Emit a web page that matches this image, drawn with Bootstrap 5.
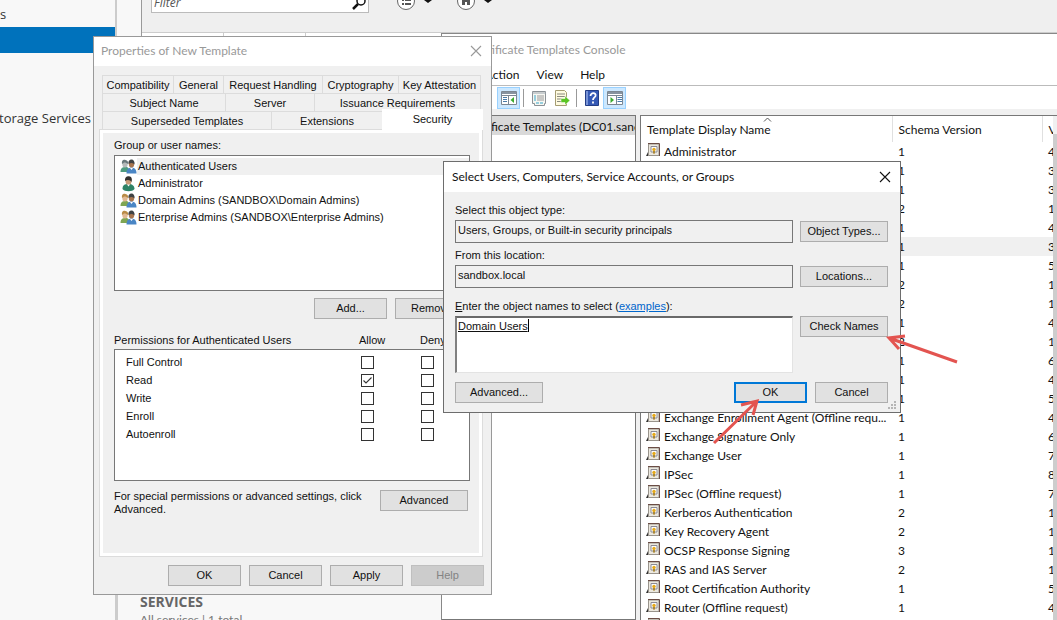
<!DOCTYPE html>
<html lang="en">
<head>
<meta charset="utf-8">
<meta name="viewport" content="width=device-width, initial-scale=1">
<title>Certificate Templates Console</title>
<link href="https://cdn.jsdelivr.net/npm/bootstrap@5.3.0/dist/css/bootstrap.min.css" rel="stylesheet">
<style>
  :root { --ui: Lato, "Open Sans", sans-serif; --dlg: "Liberation Sans", Arial, sans-serif; }
  body { font: 12px/19px var(--ui); color: #111; background: #fff; }
  .desktop { height: 100vh; }
  .dlg { font: 11px/13px var(--dlg); color: #111; background: #f0f0f0; }
  .titlebar { height: 29px; background: #fff; font: 12px/16px var(--ui); }
  .closer { display: flex; align-items: center; justify-content: center; width: 30px; height: 28px; color: inherit; }
  .w-btn { height: 21px; width: 73px; padding: 0; font: 11px/13px var(--dlg); color: #111; background: #e1e1e1; border: 1px solid #adadad; border-radius: 0; }
  .w-btn.wide { width: 88px; }
  .w-btn.primary { border: 2px solid #0078d7; }
  .w-btn:disabled { color: #838383; background: #ccc; border-color: #bfbfbf; opacity: 1; }

  /* Server Manager, behind everything */
  .manager { background: #f8f8f8; }
  .side { width: 115px; font: 13px/26px "Open Sans", sans-serif; color: #333; padding-top: 1px; }
  .side a { color: inherit; height: 26px; white-space: nowrap; display: flex; justify-content: flex-end; }
  .side .chosen { background: #0072bc; }
  .gutter { width: 26px; border-left: 2px solid #ccc; }
  .stage { border-left: 1px solid #999; background: #fff; }
  .strip { height: 33px; background: #efefef; border-bottom: 1px solid #ccc; padding-left: 9px; }
  .filter { width: 218px; height: 21px; margin-top: -8px; background: #fff; border: 1px solid #bbb; }
  .filter input { font: italic 12px/16px "Open Sans", sans-serif; color: #555; border: 0; width: 190px; padding: 0 2px; }
  .filter input::placeholder { color: #555; opacity: 1; }
  .tile-heads span { width: 82px; border-right: 1px solid #ccc; height: 30px; }
  .services { left: 116px; width: 325px; top: 590px; bottom: 0; padding: 3px 22px; background: #f8f8f8; border-left: 2px solid #ccc; color: #777; line-height: 17px; }
  .services h2 { font: bold 14px/18px "Open Sans", sans-serif; color: #666; margin: 0; }

  /* Console window */
  .console { left: 441px; right: 0; top: 33px; bottom: 0; background: #fff; border: 1px solid #888; border-width: 1px 0 0 1px; }
  .console-title { height: 31px; padding-left: 27px; color: #999; }
  .menus { height: 22px; padding-left: 7px; gap: 17px; border-bottom: 1px solid #bbb; }
  .menus a { color: #111; text-decoration: none; }
  .tools { height: 23px; padding-left: 55px; }
  .tools button { width: 23px; height: 22px; padding: 0; background: none; border: 1px solid transparent; }
  .tools button.on { background: #cce8ff; border-color: #99d1ff; }
  .tools .bar { width: 1px; height: 18px; margin: 0 3px; background: #999; }
  .panes { background: #f0f0f0; padding-top: 6px; gap: 4px; }
  .tree { width: 194px; flex: none; background: #fff; border: 1px solid #777; border-left: 0; }
  .tree div { height: 19px; line-height: 21px; background: #d9d9d9; padding-left: 23px; white-space: nowrap; overflow: hidden; }
  .listing { background: #fff; border: 1px solid #777; border-width: 1px 0 0 1px; overflow: hidden; }
  .templates { width: 100%; table-layout: fixed; border-collapse: collapse; line-height: 18px; }
  .templates th { height: 26px; font-weight: 400; padding: 2px 0 0 6px; border-right: 1px solid #e0e0e0; white-space: nowrap; }
  .templates th:last-child { border: 0; }
  .templates td { height: 19px; padding: 0 0 0 6px; white-space: nowrap; overflow: hidden; }
  .templates tr.hot { background: #f0f0f0; }
  .templates td div { margin-left: -1px; }
  .templates svg { display: block; flex: none; margin-bottom: 3px; }
  .thumb { width: 4px; flex: none; background: #cdcdcd; border-top: 18px solid #f0f0f0; }
  .sorter { left: 122px; top: 1px; }

  /* Properties dialog */
  .props { left: 93px; top: 36px; width: 399px; border: 1px solid #999; }
  .props .titlebar { color: #999; padding: 0 0 2px 7px; }
  .tabs { margin: 9px 10px 0 8px; }
  .tabs > div { height: 18px; }
  .tabs button { font: 11px/13px var(--dlg); color: #111; padding: 2px 0 0; background: #f0f0f0; border: 1px solid #dcdcdc; border-width: 1px 0 0 1px; }
  .tabs > div button:last-child { border-right-width: 1px; }
  .tabs .active { background: #fff; height: 21px; margin: -2px -2px 0 0; padding: 0 0 2px; border-color: #fff; position: relative; z-index: 1; }
  .sheet { margin: 0 8px 0 5px; height: 428px; padding: 9px 11px 0 14px; border: 1px solid #dcdcdc; outline: 3px solid #fff; outline-offset: -4px; }
  .box { background: #fff; border: 1px solid #777; width: 356px; }
  .people { height: 136px; margin: 3px 0 0; padding: 2px 0 0 5px; }
  .people li { height: 17px; line-height: 17px; }
  .people span { flex: 1; padding-left: 1px; }
  .people .sel span { background: #f0f0f0; }
  .perms { width: 356px; table-layout: fixed; }
  .perms th { font-weight: 400; height: 18px; padding: 0; white-space: nowrap; }
  .perms td { height: 18px; padding: 0; background: #fff; line-height: 18px; }
  .perms td:first-child { padding-left: 11px; }
  .perms input { appearance: none; display: block; width: 13px; height: 13px; margin: 0; border: 1px solid #333; background: #fff; }
  .perms input:checked { background: #fff url("data:image/svg+xml,%3Csvg xmlns='http://www.w3.org/2000/svg' viewBox='0 0 11 11'%3E%3Cpath d='M1.5 5.5 4 8 9.5 2.5' fill='none' stroke='%23333' stroke-width='1.1'/%3E%3C/svg%3E"); }
  .permbox { height: 132px; }
  .permbox .perms { width: 354px; margin-top: 3px; }
  .hint { width: 266px; }

  /* Object picker dialog */
  .picker { left: 443px; top: 161px; width: 458px; height: 252px; border: 1px solid #6d6d6d; }
  .picker .titlebar { height: 30px; padding-left: 8px; color: #111; }
  .picker label { display: block; height: 13px; }
  .picker .form-area { padding: 12px 12px 0 11px; }
  .picker .line { display: flex; justify-content: space-between; align-items: center; margin: 3px 0 6px; }
  .picker .field { width: 338px; height: 23px; padding: 0 2px 3px; font: 11px/13px var(--dlg); color: #111; background: #f0f0f0; border: 1px solid #777; border-radius: 0; }
  .picker textarea { display: block; width: 338px; height: 57px; resize: none; padding: 2px 1px; font: 11px/13px var(--dlg); color: #111; text-decoration: underline; border: 1px solid #e3e3e3; border-top: 2px solid #696969; border-left: 2px solid #808080; border-radius: 0; background: #fff; }
  .picker a { color: #06c; }
  .caret { left: 528px; top: 319px; width: 1px; height: 13px; background: #000; }
  .grip { right: 3px; bottom: 2px; }
</style>
</head>
<body>
<svg width="0" height="0" class="position-absolute">
  <defs>
    <symbol id="cert" viewBox="0 0 14 14">
      <path d="M0 13 2.500 8V13z" fill="#333"/>
      <path d="M2.500 1h10.500v11.500H2.500z" fill="#ece8df" stroke="#99948c"/>
      <path d="M2 .5h11.500V13" fill="none" stroke="#6b4d45"/>
      <path d="M5 3.500h6v5.500H5z" fill="#fff" stroke="#8b8b93"/>
      <circle cx="8" cy="6.500" r="1.700" fill="#e5a91b"/><path d="M7.200 8h1.600v3L8 10.300l-.8.7z" fill="#a37a1a"/>
    </symbol>
    <symbol id="pair" viewBox="0 0 16 15">
      <path d="M0 13c0-4 2-5 5-5s4 2 4 5z" fill="var(--a)"/><ellipse cx="4.500" cy="5" rx="2.700" ry="3.500" fill="var(--s)"/>
      <path d="M1.500 5C1 1 3 .5 5 1c2 .3 3 2 2.500 4C6 4 4 3 3 4z" fill="var(--h)"/>
      <path d="M6 14.500c0-4 2-6 5-6s5 2 5 6z" fill="#4a86c5"/><ellipse cx="11" cy="5" rx="2.700" ry="3.600" fill="#a8754f"/>
      <path d="M8 5c-.5-3 1-4.500 3-4.500s3.500 2 3 5C13 4 11 3 8 5z" fill="#3f4244"/><path d="m9.500 9 1.500 2 1.500-2z" fill="#fff"/>
    </symbol>
    <symbol id="person" viewBox="0 0 16 16">
      <path d="M2 13c0-4 2-5 6-5s6 2 6 5c-2 3-10 3-12 0z" fill="#2f8266"/><ellipse cx="8" cy="5" rx="3" ry="4" fill="#c99a77"/>
      <path d="M4.500 5C4 1.500 6 0 8.500.3 11 .5 12 3 11 6 10 4 7 3 4.500 5z" fill="#33302e"/><path d="m6.500 8.500 1.500 2 1.500-2z" fill="#fff"/>
    </symbol>
    <symbol id="cross" viewBox="0 0 12 12"><path d="m1 1 10 10M11 1 1 11" stroke="currentColor" stroke-width="1.100"/></symbol>
    <symbol id="window" viewBox="0 0 16 14">
      <path d="M.5.500h15v13H.5z" fill="#fff" stroke="#7c8792"/><path d="M1 1h14v2H1z" fill="#8793a0"/><path d="M1 4.500h14" stroke="#7c8792"/>
    </symbol>
  </defs>
</svg>

<main class="desktop position-relative overflow-hidden">
  <section class="manager d-flex h-100">
    <nav class="side flex-shrink-0 overflow-hidden">
      <a href="#" class="text-decoration-none justify-content-start">s</a>
      <a href="#" class="chosen" aria-label="Selected server role"></a>
      <a href="#" class="text-decoration-none mt-5 pt-1 me-4">File and Storage Services</a>
    </nav>
    <div class="gutter flex-shrink-0"></div>
    <div class="stage flex-fill">
      <div class="strip d-flex align-items-start">
        <div class="filter d-flex align-items-center justify-content-between">
          <input type="text" placeholder="Filter" aria-label="Filter">
          <svg width="16" height="18" viewBox="0 0 16 18"><circle cx="9" cy="7" r="4" fill="none" stroke="#111" stroke-width="1.500"/><path d="m6 10-5 5" stroke="#111" stroke-width="2.500"/></svg>
        </div>
        <svg class="ms-4" width="120" height="14" viewBox="0 0 120 14">
          <g fill="#fff" stroke="#666"><circle cx="13" cy="1" r="8.500"/><circle cx="73" cy="1" r="8.500"/></g>
          <path d="M9 0h2M12 0h6M9 4h2M12 4h6" stroke="#555" stroke-width="2"/>
          <path d="M69 0h8v5h-3V2h-2v3h-3z" fill="#555"/>
          <path d="m31 0 4 3 4-3zM91 0l4 3 4-3z" fill="#111"/>
        </svg>
      </div>
      <div class="tile-heads d-flex"><span></span><span></span></div>
    </div>
  </section>

  <section class="services position-absolute">
    <h2>SERVICES</h2>
    <div>All services | 1 total</div>
  </section>

  <section class="console position-absolute d-flex flex-column">
    <header class="console-title d-flex align-items-center">Certificate Templates Console</header>
    <nav class="menus d-flex align-items-center flex-shrink-0">
      <a href="#">File</a><a href="#">Action</a><a href="#">View</a><a href="#">Help</a>
    </nav>
    <div class="tools d-flex align-items-center flex-shrink-0">
      <button type="button" class="on d-flex align-items-center justify-content-center" aria-label="Show tree">
        <svg width="16" height="14"><use href="#window"/><path d="M7.500 5v8" stroke="#7c8792"/><path d="M2 6.500h4M2 8.500h4M2 10.500h4" stroke="#4a7ba8"/><path d="M13 6v6L9.500 9z" fill="#3cab2f"/></svg></button>
      <span class="bar"></span>
      <button type="button" class="d-flex align-items-center justify-content-center" aria-label="Properties">
        <svg width="16" height="16"><path d="M1.500 1.500h13v12h-1v2h-10v-2h-2z" fill="#f7f7f2" stroke="#8b9196"/><path d="M1 3h14" stroke="#9aa3ab"/><path d="M3 6h2M3 8h2M3 10h2M5 13h3M9 13h3" stroke="#39a6c9"/><path d="M6 6h7M6 8h7M6 10h7" stroke="#999"/></svg></button>
      <button type="button" class="d-flex align-items-center justify-content-center" aria-label="Export list">
        <svg width="16" height="16"><path d="M1.500.500h9l2 2v13h-11z" fill="#fffbe0" stroke="#a59c72"/><path d="M3 4h8M3 6.500h8M3 9h5M3 11.500h5" stroke="#8a8a80"/><path d="M7 8.500h4V6l5 4.500-5 4.500v-2.500H7z" fill="#5ac422" stroke="#fff" stroke-width=".5"/></svg></button>
      <span class="bar"></span>
      <button type="button" class="d-flex align-items-center justify-content-center" aria-label="Help">
        <svg width="14" height="16"><path d="M.5.500h13v15H.5z" fill="#3559b5" stroke="#233d85"/><path d="M1 1h2v14H1z" fill="#7893d6"/><path d="M5.500 6c0-4 6-3.500 5 0C10 7.500 8 7.500 8 10M8 11.500v2" fill="none" stroke="#fff" stroke-width="1.800"/></svg></button>
      <button type="button" class="on d-flex align-items-center justify-content-center" aria-label="Show actions">
        <svg width="16" height="14"><use href="#window"/><path d="M9.500 5v8" stroke="#7c8792"/><path d="M10.500 6.500H15M10.500 8.500H15M10.500 10.500H15" stroke="#4a7ba8"/><path d="M3.500 6v6L7 9z" fill="#3cab2f"/></svg></button>
    </div>
    <div class="panes d-flex flex-fill overflow-hidden">
      <div class="tree"><div>Certificate Templates (DC01.sandbox.local)</div></div>
      <div class="listing flex-fill d-flex position-relative">
        <svg class="sorter position-absolute" width="9" height="5"><path d="m1 4.500 3.500-3.500L8 4.500" fill="none" stroke="#555"/></svg>
        <div class="flex-fill">
        <table class="templates">
          <colgroup><col style="width:251px"><col style="width:150px"><col></colgroup>
          <thead><tr><th>Template Display Name</th><th>Schema Version</th><th>V</th></tr></thead>
          <tbody id="rows"></tbody>
        </table>
        </div>
        <div class="thumb"></div>
      </div>
    </div>
  </section>

  <section class="dlg props position-absolute" role="dialog" aria-label="Properties of New Template">
    <header class="titlebar d-flex align-items-center justify-content-between">Properties of New Template
      <button type="button" class="closer btn p-0 border-0" aria-label="Close"><svg width="12" height="12"><use href="#cross"/></svg></button></header>
    <div class="tabs" role="tablist">
      <div class="d-flex"><button type="button" role="tab" style="width:71px">Compatibility</button><button type="button" role="tab" style="width:50px">General</button><button type="button" role="tab" style="width:99px">Request Handling</button><button type="button" role="tab" style="width:76px">Cryptography</button><button type="button" role="tab" class="flex-fill">Key Attestation</button></div>
      <div class="d-flex"><button type="button" role="tab" style="width:123px">Subject Name</button><button type="button" role="tab" style="width:89px">Server</button><button type="button" role="tab" class="flex-fill">Issuance Requirements</button></div>
      <div class="d-flex"><button type="button" role="tab" style="width:169px">Superseded Templates</button><button type="button" role="tab" style="width:111px">Extensions</button><button type="button" role="tab" class="active flex-fill">Security</button></div>
    </div>
    <div class="sheet">
      <div>Group or user names:</div>
      <ul class="box people list-unstyled">
        <li class="d-flex align-items-center sel"><svg width="17" height="15" style="--a:#4f9b80;--s:#b5b9b9;--h:#68777a"><use href="#pair"/></svg><span>Authenticated Users</span></li>
        <li class="d-flex align-items-center"><svg width="17" height="16"><use href="#person"/></svg><span>Administrator</span></li>
        <li class="d-flex align-items-center"><svg width="17" height="15" style="--a:#7fa653;--s:#e0b993;--h:#b98b46"><use href="#pair"/></svg><span>Domain Admins (SANDBOX\Domain Admins)</span></li>
        <li class="d-flex align-items-center"><svg width="17" height="15" style="--a:#7fa653;--s:#e0b993;--h:#b98b46"><use href="#pair"/></svg><span>Enterprise Admins (SANDBOX\Enterprise Admins)</span></li>
      </ul>
      <div class="d-flex gap-2" style="margin:7px 0 12px 200px"><button type="button" class="w-btn">Add...</button><button type="button" class="w-btn">Remove</button></div>
      <table class="perms">
        <colgroup><col style="width:245px"><col style="width:61px"><col></colgroup>
        <thead><tr><th>Permissions for Authenticated Users</th><th>Allow</th><th>Deny</th></tr></thead>
      </table>
      <div class="box permbox">
        <table class="perms">
          <colgroup><col style="width:246px"><col style="width:60px"><col></colgroup>
          <tbody>
            <tr><td>Full Control</td><td><input type="checkbox" aria-label="Full Control, allow"></td><td><input type="checkbox" aria-label="Full Control, deny"></td></tr>
            <tr><td>Read</td><td><input type="checkbox" checked aria-label="Read, allow"></td><td><input type="checkbox" aria-label="Read, deny"></td></tr>
            <tr><td>Write</td><td><input type="checkbox" aria-label="Write, allow"></td><td><input type="checkbox" aria-label="Write, deny"></td></tr>
            <tr><td>Enroll</td><td><input type="checkbox" aria-label="Enroll, allow"></td><td><input type="checkbox" aria-label="Enroll, deny"></td></tr>
            <tr><td>Autoenroll</td><td><input type="checkbox" aria-label="Autoenroll, allow"></td><td><input type="checkbox" aria-label="Autoenroll, deny"></td></tr>
          </tbody>
        </table>
      </div>
      <div class="d-flex" style="margin-top:9px">
        <div class="hint">For special permissions or advanced settings, click Advanced.</div>
        <button type="button" class="w-btn wide">Advanced</button>
      </div>
    </div>
    <footer class="d-flex justify-content-end gap-2 py-2" style="padding-right:7px">
      <button type="button" class="w-btn">OK</button><button type="button" class="w-btn">Cancel</button><button type="button" class="w-btn">Apply</button><button type="button" class="w-btn" disabled>Help</button>
    </footer>
  </section>

  <section class="dlg picker position-absolute" role="dialog" aria-label="Select Users, Computers, Service Accounts, or Groups">
    <header class="titlebar d-flex align-items-center justify-content-between">Select Users, Computers, Service Accounts, or Groups
      <button type="button" class="closer btn p-0 border-0" aria-label="Close"><svg width="12" height="12"><use href="#cross"/></svg></button></header>
    <div class="form-area">
      <label for="kind">Select this object type:</label>
      <div class="line"><input id="kind" class="field" readonly value="Users, Groups, or Built-in security principals"><button type="button" class="w-btn wide">Object Types...</button></div>
      <label for="place">From this location:</label>
      <div class="line mb-2 pb-1"><input id="place" class="field" readonly value="sandbox.local"><button type="button" class="w-btn wide">Locations...</button></div>
      <label for="names"><u>E</u>nter the object names to select (<a href="#">examples</a>):</label>
      <div class="line align-items-start"><textarea id="names" spellcheck="false">Domain Users</textarea><button type="button" class="w-btn wide">Check Names</button></div>
      <div class="d-flex gap-2" style="padding-top:3px"><button type="button" class="w-btn wide me-auto">Advanced...</button><button type="button" class="w-btn primary">OK</button><button type="button" class="w-btn">Cancel</button></div>
    </div>
    <svg class="grip position-absolute" width="9" height="9" fill="#b5b5b5"><path d="M6 0h2v2H6zM3 3h2v2H3zM6 3h2v2H6zM0 6h2v2H0zM3 6h2v2H3zM6 6h2v2H6z"/></svg>
  </section>
  <span class="caret position-absolute"></span>

  <svg class="position-absolute top-0 start-0 pe-none" width="1000" height="460" fill="none" stroke="#e35450" stroke-width="3">
    <path d="M957 362 889 338M905 336 889 338 899 349"/>
    <path d="M714 443 757 401M741 405 757 401 753 415"/>
  </svg>
</main>

<script src="https://cdn.jsdelivr.net/npm/bootstrap@5.3.0/dist/js/bootstrap.bundle.min.js"></script>
<script>
  const names = { 0: 'Administrator', 14: 'Exchange Enrollment Agent (Offline requ...', 15: 'Exchange Signature Only', 16: 'Exchange User', 17: 'IPSec', 18: 'IPSec (Offline request)', 19: 'Kerberos Authentication', 20: 'Key Recovery Agent', 21: 'OCSP Response Signing', 22: 'RAS and IAS Server', 23: 'Root Certification Authority', 24: 'Router (Offline request)', 25: '' };
  const schema = '1112111221211111111223211';
  const version = '4331435114164546787111154';
  document.getElementById('rows').innerHTML = Array.from({ length: 26 }, (_, i) =>
    `<tr class="${i === 5 ? 'hot' : ''}"><td><div class="d-flex align-items-center gap-1">${i in names ? '<svg width="14" height="14"><use href="#cert"/></svg>' + names[i] : ''}</div></td><td>${schema[i] || ''}</td><td>${version[i] || ''}</td></tr>`).join('');
</script>
</body>
</html>
